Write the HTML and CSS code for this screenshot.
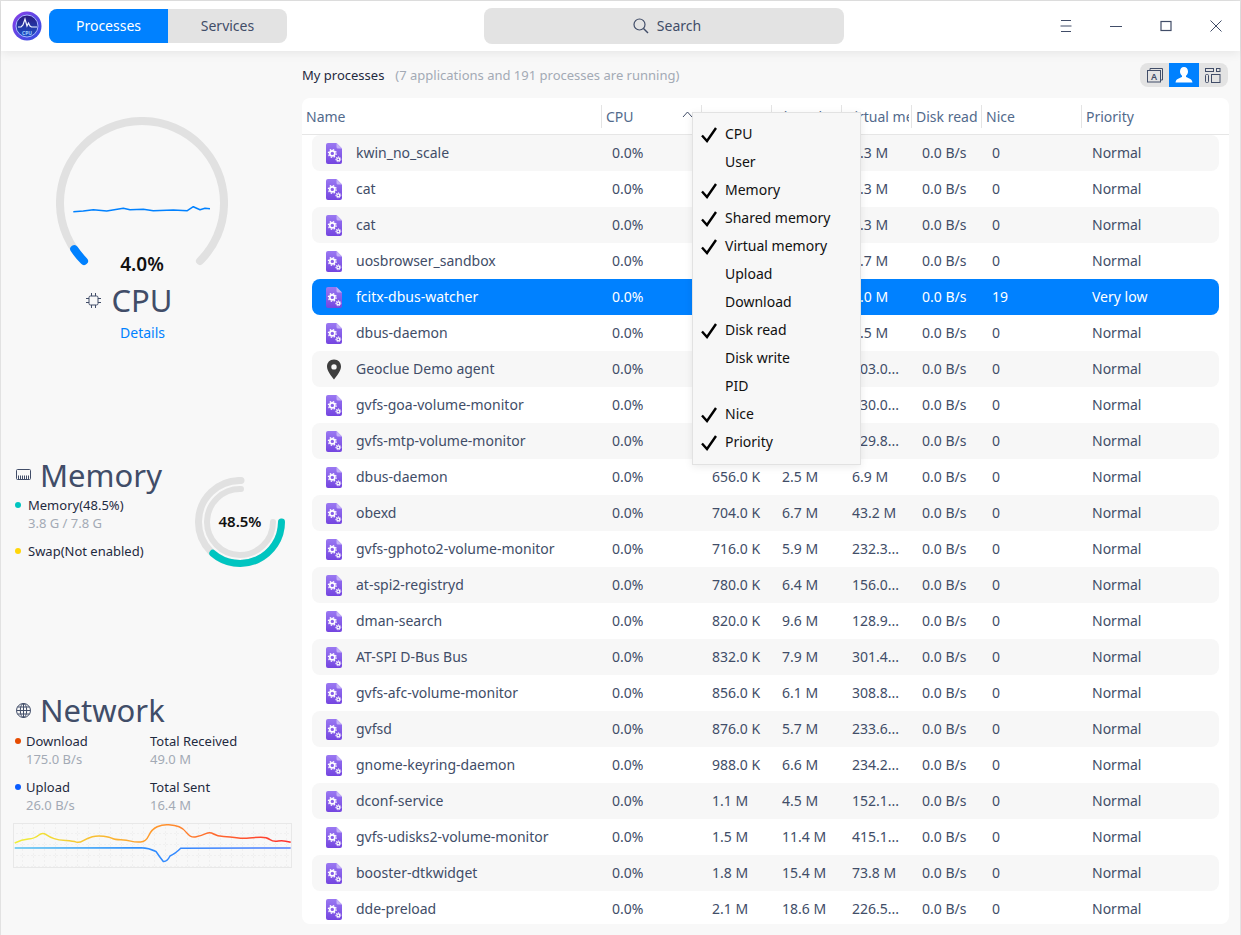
FILE: index.html
```html
<!DOCTYPE html>
<html lang="en">
<head>
  <meta charset="UTF-8" />
  <meta name="viewport" content="width=device-width, initial-scale=1.0"/>
  <title>System Monitor</title>
  <link rel="stylesheet" href="styles.css">
</head>
<body>
  <svg class="defs" width="0" height="0">
    <defs>
      <linearGradient id="docFill" x1="0" y1="0" x2="0" y2="1">
        <stop offset="0" stop-color="#9a78f2"/>
        <stop offset="1" stop-color="#7445e0"/>
      </linearGradient>
      <linearGradient id="logoFill" x1="0" y1="0" x2="1" y2="1">
        <stop offset="0" stop-color="#8a3fe8"/>
        <stop offset="1" stop-color="#2f4fe0"/>
      </linearGradient>
      <linearGradient id="logoInner" x1="0" y1="0" x2="0" y2="1">
        <stop offset="0" stop-color="#2a1a80"/>
        <stop offset="1" stop-color="#1c50c8"/>
      </linearGradient>
      <linearGradient id="downLine" x1="0" y1="0" x2="1" y2="0">
        <stop offset="0" stop-color="#eef03a"/>
        <stop offset="0.5" stop-color="#ff9a2e"/>
        <stop offset="1" stop-color="#ff2f2f"/>
      </linearGradient>
      <linearGradient id="upLine" x1="0" y1="0" x2="1" y2="0">
        <stop offset="0" stop-color="#56c2f0"/>
        <stop offset="0.5" stop-color="#2f8cff"/>
        <stop offset="1" stop-color="#4f7dff"/>
      </linearGradient>
      <pattern id="chartGrid" width="11" height="11" patternUnits="userSpaceOnUse" x="-1" y="0">
        <path d="M11 0V11M0 11H11" fill="none" stroke="#e8e8e8" stroke-dasharray="2 2"/>
      </pattern>
      <symbol id="proc" viewBox="0 0 16 21">
        <path d="M2 0h8.500L16 5.500V19a2 2 0 0 1-2 2H2a2 2 0 0 1-2-2V2a2 2 0 0 1 2-2z" fill="url(#docFill)"/>
        <path d="M10.500 0L16 5.500h-4a1.500 1.500 0 0 1-1.500-1.500z" fill="#c4b0f8"/>
        <circle cx="6.300" cy="10.400" r="2.500" fill="none" stroke="#fff" stroke-width="1.600"/>
        <circle cx="6.300" cy="10.400" r="3.900" fill="none" stroke="#fff" stroke-width="1.300" stroke-dasharray="1.500 1.560"/>
        <circle cx="12.300" cy="16.300" r="1.500" fill="none" stroke="#fff" stroke-width="1.200"/>
        <circle cx="12.300" cy="16.300" r="2.500" fill="none" stroke="#fff" stroke-width="1" stroke-dasharray="1.200 1.020"/>
      </symbol>
      <symbol id="check" viewBox="0 0 17 17">
        <path d="M1 8.500L6 14 15 1" fill="none" stroke="#000" stroke-width="2.400"/>
      </symbol>
    </defs>
  </svg>

  <div class="window">
    <header class="titlebar">
      <svg class="logo" width="30" height="30" viewBox="0 0 30 30">
        <circle cx="15" cy="15" r="14.500" fill="url(#logoFill)"/>
        <circle cx="15" cy="15" r="11" fill="url(#logoInner)" stroke="#a8b8ff" stroke-width="1"/>
        <path d="M6 16h3l2-2 2-6 2 7 1.500-3 1.500 3 1.500 1H25" fill="none" stroke="#eef3ff" stroke-width="1.200"/>
        <text x="15" y="23.500" class="logo-text">CPU</text>
      </svg>
      <div class="tabs">
        <div class="tab tab-active">Processes</div>
        <div class="tab">Services</div>
      </div>
      <div class="search">
        <svg width="18" height="18" viewBox="0 0 18 18">
          <circle cx="7.500" cy="7.500" r="5.500" fill="none" stroke="#414d68" stroke-width="1.200"/>
          <path d="M11.500 11.500L16 16" stroke="#414d68" stroke-width="1.400"/>
        </svg>
        <span>Search</span>
      </div>
      <div class="win-btns">
        <div class="win-btn">
          <svg width="14" height="14" viewBox="0 0 14 14"><path d="M2 1.500h10M1.500 7h11M2 12.500h10" stroke="#414d68" fill="none"/></svg>
        </div>
        <div class="win-btn">
          <svg width="14" height="14" viewBox="0 0 14 14"><path d="M1 7.500h12" stroke="#414d68" fill="none"/></svg>
        </div>
        <div class="win-btn">
          <svg width="14" height="14" viewBox="0 0 14 14"><rect x="2" y="2.500" width="10" height="9" stroke="#414d68" stroke-width="1.200" fill="none"/></svg>
        </div>
        <div class="win-btn">
          <svg width="14" height="14" viewBox="0 0 14 14"><path d="M1.500 1.500l11 11M12.500 1.500l-11 11" stroke="#414d68" fill="none"/></svg>
        </div>
      </div>
    </header>

    <div class="layout">
      <aside class="sidebar">
        <section class="cpu">
          <div class="gauge">
            <svg width="172" height="172" viewBox="0 0 172 172">
              <path d="M28 144A82 82 0 1 1 144 144" fill="none" stroke="#e1e1e1" stroke-width="8" stroke-linecap="round"/>
              <path d="M28 144A82 82 0 0 1 18.200 132.100" fill="none" stroke="#0081ff" stroke-width="8" stroke-linecap="round"/>
              <polyline points="17.300,94.700 27.300,94 37.300,92.700 50.700,94 67.300,91.300 74,92.700 87.300,92.300 97.300,93.700 117.300,93 131.300,93.700 137.300,89.700 144,92.700 149,91.300 154,91.700" fill="none" stroke="#0081ff" stroke-width="1.500" stroke-linejoin="round"/>
            </svg>
            <div class="gauge-value">4.0%</div>
          </div>
          <div class="cpu-title">
            <svg width="15" height="15" viewBox="0 0 15 15">
              <rect x="3" y="3" width="9" height="9" rx="1.500" fill="none" stroke="#414d68"/>
              <path d="M0 5.500h3M0 9.500h3M12 5.500h3M12 9.500h3M5.500 0v3M9.500 0v3M5.500 12v3M9.500 12v3" stroke="#414d68" fill="none"/>
            </svg>
            <span class="big-title">CPU</span>
          </div>
          <div class="details">Details</div>
        </section>

        <section class="memory">
          <div class="memory-info">
            <div class="title-row">
              <svg width="15" height="12" viewBox="0 0 15 12">
                <rect x="0.500" y="0.500" width="14" height="10" rx="1" fill="none" stroke="#414d68"/>
                <path d="M2.500 6.500v4M4.500 6.500v4M6.500 6.500v4M8.500 6.500v4M10.500 6.500v4M12.500 6.500v4" stroke="#414d68" fill="none"/>
              </svg>
              <span class="big-title">Memory</span>
            </div>
            <div class="label"><i class="dot dot-teal"></i>Memory(48.5%)</div>
            <div class="sub sub-mem">3.8 G / 7.8 G</div>
            <div class="label label-swap"><i class="dot dot-yellow"></i>Swap(Not enabled)</div>
          </div>
          <div class="ring">
            <svg width="90" height="90" viewBox="0 0 90 90">
              <path d="M46 3.500A41.500 41.500 0 1 0 86.500 45" fill="none" stroke="#e1e1e1" stroke-width="7" stroke-linecap="round"/>
              <path d="M46 12A33 33 0 1 0 78 45" fill="none" stroke="#e1e1e1" stroke-width="6" stroke-linecap="round"/>
              <path d="M86.500 45A41.500 41.500 0 0 1 17.800 76.300" fill="none" stroke="#00c5c0" stroke-width="7" stroke-linecap="round"/>
            </svg>
            <div class="ring-value">48.5%</div>
          </div>
        </section>

        <section class="network">
          <div class="title-row">
            <svg width="15" height="15" viewBox="0 0 15 15">
              <g fill="none" stroke="#414d68">
                <circle cx="7.500" cy="7.500" r="7"/>
                <ellipse cx="7.500" cy="7.500" rx="3.200" ry="7"/>
                <path d="M7.500 0.500v14M0.500 7.500h14M1.500 4h12M1.500 11h12"/>
              </g>
            </svg>
            <span class="big-title">Network</span>
          </div>
          <div class="net-grid">
            <div>
              <div class="label"><i class="dot dot-orange"></i>Download</div>
              <div class="sub sub-net">175.0 B/s</div>
            </div>
            <div>
              <div class="label">Total Received</div>
              <div class="sub">49.0 M</div>
            </div>
            <div>
              <div class="label"><i class="dot dot-blue"></i>Upload</div>
              <div class="sub sub-net">26.0 B/s</div>
            </div>
            <div>
              <div class="label">Total Sent</div>
              <div class="sub">16.4 M</div>
            </div>
          </div>
          <svg class="net-chart" width="279" height="45" viewBox="0 0 279 45">
            <rect width="279" height="45" fill="url(#chartGrid)"/>
            <rect x="0.500" y="0.500" width="278" height="44" fill="none" stroke="#e8e8e8"/>
            <path d="M1.700 20Q8.700 16.700 15.300 16Q22 15.300 25.600 12.200Q29.300 9 33.100 11.600Q37 14.300 41.100 15.600Q45.300 17 52.800 17.600Q60.300 18.300 63.300 19.100Q66.300 20 70.300 17.600Q74.300 15.300 79.300 13.800Q84.300 12.300 90.600 13.300Q97 14.300 99.500 15.500Q102 16.700 107.800 16.800Q113.700 17 117.800 18.100Q122 19.300 127.500 19Q133 18.700 135.800 12.500Q138.700 6.300 144.200 3.800Q149.700 1.300 155.800 1.800Q162 2.300 166.100 3.800Q170.300 5.300 174 10.100Q177.700 15 183.200 13.800Q188.700 12.700 192.800 10.700Q197 8.700 200.600 11Q204.300 13.300 210.600 13.500Q217 13.700 223.600 14.700Q230.300 15.700 236.100 15Q242 14.300 247.800 14.300Q253.700 14.300 257 16.600Q260.300 19 265.300 18Q270.300 17 277.700 19.300" fill="none" stroke="url(#downLine)" stroke-width="1.500"/>
            <path d="M1.700 25L128 24.800Q136 25 143 28.500Q146 33 150.300 38.500Q154 39 157 33Q162 31 167.700 25.300L277.700 25" fill="none" stroke="url(#upLine)" stroke-width="1.500"/>
          </svg>
        </section>
      </aside>

      <main class="main">
        <div class="subhead">
          <span class="subhead-title">My processes</span>
          <span class="subhead-note">(7 applications and 191 processes are running)</span>
          <div class="view-btns">
            <div class="view-btn">
              <svg width="16" height="15" viewBox="0 0 16 15">
                <path d="M3 2V0.500h12.500V12H14" fill="none" stroke="#414d68"/>
                <rect x="0.500" y="2.500" width="13" height="11.500" fill="none" stroke="#414d68"/>
                <text x="7" y="11.500" class="view-a">A</text>
              </svg>
            </div>
            <div class="view-btn view-btn-active">
              <svg width="18" height="16" viewBox="0 0 18 16">
                <path d="M9 0c2.500 0 4 2 4 4.500 0 2-1 3.500-2 4.300v1.200c2 1 6 1.500 6.500 5.500H.5C1 11.500 5 11 7 10V8.800C6 8 5 6.500 5 4.500 5 2 6.500 0 9 0z" fill="#fff"/>
              </svg>
            </div>
            <div class="view-btn">
              <svg width="16" height="15" viewBox="0 0 16 15">
                <g fill="none" stroke="#414d68">
                  <rect x="0.500" y="0.500" width="8" height="3"/>
                  <rect x="11.500" y="0.500" width="3.500" height="3"/>
                  <rect x="0.500" y="6.500" width="3" height="8" rx="1"/>
                  <rect x="6.500" y="6.500" width="8.500" height="8"/>
                </g>
              </svg>
            </div>
          </div>
        </div>

        <div class="table">
          <div class="thead">
            <div class="th">Name</div>
            <div class="th th-sep">CPU<svg class="sort" width="11" height="7" viewBox="0 0 11 7"><path d="M1 6l4.500-5L10 6" fill="none" stroke="#414d68"/></svg></div>
            <div class="th th-sep">Memory</div>
            <div class="th th-sep">Shared memory</div>
            <div class="th th-sep">Virtual memory</div>
            <div class="th th-sep">Disk read</div>
            <div class="th th-sep">Nice</div>
            <div class="th th-sep">Priority</div>
          </div>

          <div class="tbody">
            <div class="row"><div class="name"><svg class="icon"><use href="#proc"/></svg>kwin_no_scale</div><div>0.0%</div><div>312.0 K</div><div>1.2 M</div><div>7.3 M</div><div>0.0 B/s</div><div>0</div><div>Normal</div></div>
            <div class="row"><div class="name"><svg class="icon"><use href="#proc"/></svg>cat</div><div>0.0%</div><div>320.0 K</div><div>1.2 M</div><div>7.3 M</div><div>0.0 B/s</div><div>0</div><div>Normal</div></div>
            <div class="row"><div class="name"><svg class="icon"><use href="#proc"/></svg>cat</div><div>0.0%</div><div>320.0 K</div><div>1.2 M</div><div>7.3 M</div><div>0.0 B/s</div><div>0</div><div>Normal</div></div>
            <div class="row"><div class="name"><svg class="icon"><use href="#proc"/></svg>uosbrowser_sandbox</div><div>0.0%</div><div>356.0 K</div><div>1.4 M</div><div>7.7 M</div><div>0.0 B/s</div><div>0</div><div>Normal</div></div>
            <div class="row row-selected"><div class="name"><svg class="icon"><use href="#proc"/></svg>fcitx-dbus-watcher</div><div>0.0%</div><div>388.0 K</div><div>1.6 M</div><div>9.0 M</div><div>0.0 B/s</div><div>19</div><div>Very low</div></div>
            <div class="row"><div class="name"><svg class="icon"><use href="#proc"/></svg>dbus-daemon</div><div>0.0%</div><div>424.0 K</div><div>1.9 M</div><div>6.5 M</div><div>0.0 B/s</div><div>0</div><div>Normal</div></div>
            <div class="row"><div class="name"><svg class="icon icon-pin" viewBox="0 0 16 20"><path d="M8 0C3.600 0 1 3.300 1 7c0 4.500 4.600 9.800 7 13 2.400-3.200 7-8.500 7-13 0-3.700-2.600-7-7-7zm0 4.700a2.700 2.700 0 1 1 0 5.400 2.700 2.700 0 0 1 0-5.400z" fill="#3e3e3e"/></svg>Geoclue Demo agent</div><div>0.0%</div><div>520.0 K</div><div>4.1 M</div><div>303.0...</div><div>0.0 B/s</div><div>0</div><div>Normal</div></div>
            <div class="row"><div class="name"><svg class="icon"><use href="#proc"/></svg>gvfs-goa-volume-monitor</div><div>0.0%</div><div>584.0 K</div><div>5.2 M</div><div>230.0...</div><div>0.0 B/s</div><div>0</div><div>Normal</div></div>
            <div class="row"><div class="name"><svg class="icon"><use href="#proc"/></svg>gvfs-mtp-volume-monitor</div><div>0.0%</div><div>612.0 K</div><div>5.4 M</div><div>229.8...</div><div>0.0 B/s</div><div>0</div><div>Normal</div></div>
            <div class="row"><div class="name"><svg class="icon"><use href="#proc"/></svg>dbus-daemon</div><div>0.0%</div><div>656.0 K</div><div>2.5 M</div><div>6.9 M</div><div>0.0 B/s</div><div>0</div><div>Normal</div></div>
            <div class="row"><div class="name"><svg class="icon"><use href="#proc"/></svg>obexd</div><div>0.0%</div><div>704.0 K</div><div>6.7 M</div><div>43.2 M</div><div>0.0 B/s</div><div>0</div><div>Normal</div></div>
            <div class="row"><div class="name"><svg class="icon"><use href="#proc"/></svg>gvfs-gphoto2-volume-monitor</div><div>0.0%</div><div>716.0 K</div><div>5.9 M</div><div>232.3...</div><div>0.0 B/s</div><div>0</div><div>Normal</div></div>
            <div class="row"><div class="name"><svg class="icon"><use href="#proc"/></svg>at-spi2-registryd</div><div>0.0%</div><div>780.0 K</div><div>6.4 M</div><div>156.0...</div><div>0.0 B/s</div><div>0</div><div>Normal</div></div>
            <div class="row"><div class="name"><svg class="icon"><use href="#proc"/></svg>dman-search</div><div>0.0%</div><div>820.0 K</div><div>9.6 M</div><div>128.9...</div><div>0.0 B/s</div><div>0</div><div>Normal</div></div>
            <div class="row"><div class="name"><svg class="icon"><use href="#proc"/></svg>AT-SPI D-Bus Bus</div><div>0.0%</div><div>832.0 K</div><div>7.9 M</div><div>301.4...</div><div>0.0 B/s</div><div>0</div><div>Normal</div></div>
            <div class="row"><div class="name"><svg class="icon"><use href="#proc"/></svg>gvfs-afc-volume-monitor</div><div>0.0%</div><div>856.0 K</div><div>6.1 M</div><div>308.8...</div><div>0.0 B/s</div><div>0</div><div>Normal</div></div>
            <div class="row"><div class="name"><svg class="icon"><use href="#proc"/></svg>gvfsd</div><div>0.0%</div><div>876.0 K</div><div>5.7 M</div><div>233.6...</div><div>0.0 B/s</div><div>0</div><div>Normal</div></div>
            <div class="row"><div class="name"><svg class="icon"><use href="#proc"/></svg>gnome-keyring-daemon</div><div>0.0%</div><div>988.0 K</div><div>6.6 M</div><div>234.2...</div><div>0.0 B/s</div><div>0</div><div>Normal</div></div>
            <div class="row"><div class="name"><svg class="icon"><use href="#proc"/></svg>dconf-service</div><div>0.0%</div><div>1.1 M</div><div>4.5 M</div><div>152.1...</div><div>0.0 B/s</div><div>0</div><div>Normal</div></div>
            <div class="row"><div class="name"><svg class="icon"><use href="#proc"/></svg>gvfs-udisks2-volume-monitor</div><div>0.0%</div><div>1.5 M</div><div>11.4 M</div><div>415.1...</div><div>0.0 B/s</div><div>0</div><div>Normal</div></div>
            <div class="row"><div class="name"><svg class="icon"><use href="#proc"/></svg>booster-dtkwidget</div><div>0.0%</div><div>1.8 M</div><div>15.4 M</div><div>73.8 M</div><div>0.0 B/s</div><div>0</div><div>Normal</div></div>
            <div class="row"><div class="name"><svg class="icon"><use href="#proc"/></svg>dde-preload</div><div>0.0%</div><div>2.1 M</div><div>18.6 M</div><div>226.5...</div><div>0.0 B/s</div><div>0</div><div>Normal</div></div>
          </div>

          <div class="menu">
            <div class="menu-item"><svg class="mark"><use href="#check"/></svg>CPU</div>
            <div class="menu-item menu-item-off">User</div>
            <div class="menu-item"><svg class="mark"><use href="#check"/></svg>Memory</div>
            <div class="menu-item"><svg class="mark"><use href="#check"/></svg>Shared memory</div>
            <div class="menu-item"><svg class="mark"><use href="#check"/></svg>Virtual memory</div>
            <div class="menu-item menu-item-off">Upload</div>
            <div class="menu-item menu-item-off">Download</div>
            <div class="menu-item"><svg class="mark"><use href="#check"/></svg>Disk read</div>
            <div class="menu-item menu-item-off">Disk write</div>
            <div class="menu-item menu-item-off">PID</div>
            <div class="menu-item"><svg class="mark"><use href="#check"/></svg>Nice</div>
            <div class="menu-item"><svg class="mark"><use href="#check"/></svg>Priority</div>
          </div>
        </div>
      </main>
    </div>
  </div>
</body>
</html>
```
FILE: styles.css
```css
* {
  margin: 0;
  padding: 0;
  box-sizing: border-box;
}
html, body {
  height: 100%;
  overflow: hidden;
}
body {
  font-family: "Noto Sans", sans-serif;
  font-size: 14px;
  color: #414d68;
  background: #f8f8f8;
}
.defs {
  position: absolute;
}
.window {
  height: 935px;
  display: flex;
  flex-direction: column;
  border: 1px solid #e2e2e2;
  border-bottom: none;
}

/* title bar */
.titlebar {
  height: 50px;
  flex: none;
  display: flex;
  align-items: center;
  background: white;
  box-shadow: 0 2px 10px rgba(0, 0, 0, 0.08);
  position: relative;
  z-index: 2;
  padding-left: 11px;
}
.logo {
  flex: none;
}
.logo-text {
  font-size: 5px;
  font-weight: bold;
  fill: #9fd0ff;
  text-anchor: middle;
}
.tabs {
  display: flex;
  width: 238px;
  height: 34px;
  margin-left: 7px;
  border-radius: 8px;
  overflow: hidden;
  background: #e3e3e3;
}
.tab {
  flex: 1;
  display: flex;
  align-items: center;
  justify-content: center;
  padding-bottom: 2px;
}
.tab-active {
  background: #0081ff;
  color: white;
}
.search {
  width: 360px;
  height: 36px;
  margin-left: 197px;
  display: flex;
  align-items: center;
  justify-content: center;
  gap: 7px;
  padding-left: 5px;
  background: #e3e3e3;
  border-radius: 8px;
}
.search span {
  padding-bottom: 2px;
}
.win-btns {
  display: flex;
  margin-left: auto;
  margin-right: -1px;
}
.win-btn {
  width: 50px;
  height: 50px;
  display: flex;
  align-items: center;
  justify-content: center;
}

/* sidebar */
.layout {
  flex: 1;
  display: flex;
  min-height: 0;
}
.sidebar {
  width: 294px;
  flex: none;
  padding-top: 66px;
  padding-left: 15px;
  font-size: 13px;
}
.big-title {
  font-size: 31px;
  line-height: 36px;
}
.cpu {
  display: flex;
  flex-direction: column;
  align-items: center;
  width: 252px;
}
.gauge {
  width: 172px;
  height: 165px;
  position: relative;
}
.gauge-value {
  position: absolute;
  left: 0;
  right: 0;
  top: 134px;
  text-align: center;
  font-size: 19px;
  line-height: 26px;
  font-weight: 600;
  color: #111;
}
.cpu-title {
  display: flex;
  align-items: center;
  gap: 10px;
  padding-right: 25px;
}
.details {
  margin-top: 5px;
  margin-left: 1px;
  line-height: 20px;
  font-size: 14px;
  color: #0081ff;
}
.memory {
  display: flex;
  margin-top: 114px;
}
.memory-info {
  flex: 1;
}
.title-row {
  display: flex;
  align-items: center;
  gap: 9px;
}
.label {
  line-height: 18px;
  color: #1f2a3f;
}
.memory-info .label {
  margin-top: 3px;
}
.memory-info .label-swap {
  margin-top: 10px;
}
.sub {
  line-height: 18px;
  color: #a3aab5;
}
.sub-mem {
  padding-left: 12px;
}
.sub-net {
  padding-left: 10px;
}
.dot {
  display: inline-block;
  width: 6px;
  height: 6px;
  border-radius: 50%;
  margin-right: 4px;
  vertical-align: 2px;
}
.memory-info .dot {
  margin-left: -1px;
  margin-right: 7px;
}
.net-grid .dot {
  margin-left: -1px;
  margin-right: 5px;
}
.dot-teal { background: #00c5c0; }
.dot-yellow { background: #ffd60a; }
.dot-orange { background: #e64b00; }
.dot-blue { background: #0a5cff; }
.ring {
  width: 90px;
  height: 90px;
  position: relative;
  margin-top: 20px;
  margin-right: 10px;
  flex: none;
}
.ring-value {
  position: absolute;
  left: 0;
  right: 0;
  top: 34px;
  text-align: center;
  font-size: 15px;
  line-height: 20px;
  font-weight: 600;
  color: #111;
}
.network {
  margin-top: 125px;
}
.net-grid {
  display: grid;
  grid-template-columns: 134px 1fr;
  row-gap: 10px;
  margin-top: 4px;
}
.net-chart {
  display: block;
  margin-top: 9px;
  margin-left: -3px;
}

/* main */
.main {
  flex: 1;
  min-width: 0;
  display: flex;
  flex-direction: column;
  padding: 12px 11px 11px 7px;
}
.subhead {
  height: 24px;
  flex: none;
  display: flex;
  align-items: center;
  margin-bottom: 11px;
  font-size: 13px;
}
.subhead-title {
  color: #1f2a3f;
}
.subhead-note {
  margin-left: 11px;
  color: #a3aab5;
}
.view-btns {
  display: flex;
  margin-left: auto;
  margin-right: 1px;
  height: 24px;
  width: 88px;
  border-radius: 8px;
  overflow: hidden;
  background: #e3e3e3;
}
.view-btn {
  flex: 1;
  display: flex;
  align-items: center;
  justify-content: center;
}
.view-btn-active {
  background: #0081ff;
}
.view-a {
  font-size: 9px;
  font-weight: 600;
  fill: #414d68;
  text-anchor: middle;
}

/* table */
.table {
  flex: 1;
  min-height: 0;
  background: white;
  border-radius: 8px;
  overflow: hidden;
  position: relative;
}
.thead {
  height: 37px;
  display: grid;
  grid-template-columns: 299px 100px 70px 70px 70px 70px 100px 1fr;
  border-bottom: 1px solid #e6e6e6;
}
.th {
  display: flex;
  align-items: center;
  padding-left: 4px;
  white-space: nowrap;
  overflow: hidden;
  position: relative;
  color: #526a8c;
}
.th-sep {
  padding-left: 5px;
  clip-path: inset(0 2px 0 0);
}
.th-sep::before {
  content: "";
  position: absolute;
  left: 0;
  top: 7px;
  bottom: 6px;
  width: 1px;
  background: #e4e4e4;
}
.sort {
  margin-left: auto;
  margin-right: 8px;
  margin-top: -4px;
}
.row {
  height: 36px;
  margin: 0 10px;
  display: grid;
  grid-template-columns: 289px 100px 70px 70px 70px 70px 100px 1fr;
  align-items: center;
  border-radius: 8px;
  white-space: nowrap;
  padding-bottom: 2px;
}
.row > div {
  padding-left: 11px;
}
.row:nth-child(odd) {
  background: #f7f7f7;
}
.row.row-selected {
  background: #0081ff;
  color: white;
}
.row > .name {
  display: flex;
  align-items: center;
  padding-left: 14px;
}
.icon {
  width: 16px;
  height: 21px;
  flex: none;
  margin-right: 14px;
  margin-top: 2px;
}

/* column menu */
.menu {
  position: absolute;
  left: 390px;
  top: 14px;
  width: 169px;
  padding: 6px 0 9px;
  background: #f7f7f7;
  border: 1px solid #e2e2e2;
  box-shadow: 0 2px 8px rgba(0, 0, 0, 0.08);
  color: #111;
}
.menu-item {
  height: 28px;
  display: flex;
  align-items: center;
  padding-left: 8px;
}
.menu-item-off {
  padding-left: 32px;
}
.mark {
  width: 17px;
  height: 17px;
  flex: none;
  margin-right: 7px;
  margin-top: 4px;
}
```
